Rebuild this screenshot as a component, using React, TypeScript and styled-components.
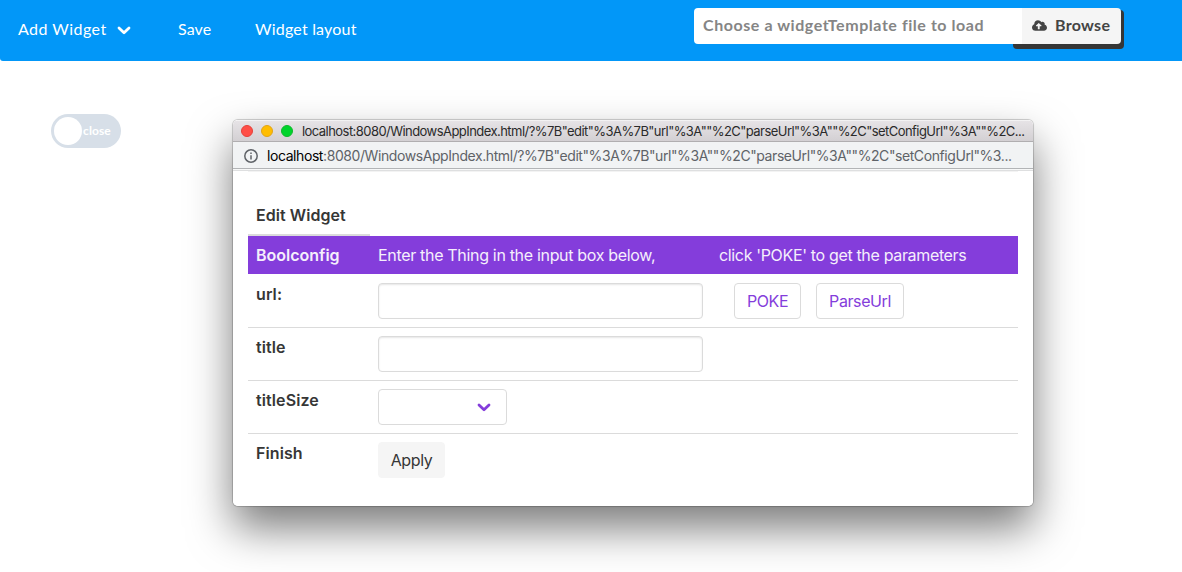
import React from "react";
import styled, { createGlobalStyle } from "styled-components";
import { FaCloudUploadAlt } from "react-icons/fa";

const GlobalStyle = createGlobalStyle`
  *, *::before, *::after { box-sizing: border-box; }
  html, body { margin: 0; height: 100%; overflow: hidden; background: #fff; }
  body { font-family: Inter, "Liberation Sans", sans-serif; font-size: 16px; line-height: 24px; color: #363636; }
  button, input { font: inherit; }
`;

const Page = styled.div`
  position: relative;
  width: 1182px;
  height: 572px;
  overflow: hidden;
`;

const NavBar = styled.nav`
  display: flex;
  align-items: flex-start;
  height: 61px;
  background: #0297f8;
  border-radius: 0 0 0 3px;
  color: #fff;
  font-family: Lato, sans-serif;
`;

const NavItem = styled.a<{ $width: number; $spacing?: number }>`
  display: flex;
  align-items: center;
  width: ${(p) => p.$width}px;
  height: 58px;
  white-space: nowrap;
  letter-spacing: ${(p) => p.$spacing ?? 0}px;
`;

const NavStart = styled.div`
  display: flex;
  width: 694px;
  padding-left: 18px;
`;

const Chevron = styled.svg`
  display: block;
  width: 14px;
  height: 9px;
  fill: none;
  stroke: currentColor;
  stroke-width: 2.8;
  stroke-linecap: round;
  stroke-linejoin: round;
`;

const ArrowSlot = styled.span`
  display: flex;
  margin: 2px 0 0 auto;
  padding-right: 47px;
`;

const FilePicker = styled.label`
  position: relative;
  display: flex;
  z-index: 0;
  width: 428px;
  height: 36px;
  margin-top: 8px;
  font-weight: 700;
  &::before {
    content: "";
    position: absolute;
    z-index: -1;
    left: 319px;
    top: 2px;
    width: 111px;
    height: 39px;
    border-radius: 4px;
    background: #363636;
  }
`;

const FileName = styled.span<{ $spacing: number }>`
  width: 328px;
  padding-left: 9px;
  line-height: 34px;
  background: #fff;
  border-radius: 4px 0 0 4px;
  color: #858585;
  white-space: nowrap;
  letter-spacing: ${(p) => p.$spacing}px;
`;

const BrowseButton = styled.span`
  display: flex;
  align-items: center;
  gap: 8px;
  width: 99px;
  padding: 0 0 2px 10px;
  background: #f5f5f5;
  border-radius: 0 4px 4px 0;
  color: #444;
  letter-spacing: 0.3px;
  svg { width: 15px; height: 15px; margin-top: 1px; }
`;

const Toggle = styled.div`
  display: flex;
  align-items: center;
  width: 70px;
  height: 34px;
  margin: 53px 0 0 51px;
  padding-left: 3px;
  border-radius: 17px;
  background: #d7dfe8;
  color: #fff;
  font: 700 12px/34px Lato, sans-serif;
  letter-spacing: 0.1px;
`;

const Knob = styled.span`
  width: 28px;
  height: 28px;
  margin-right: 1px;
  border-radius: 50%;
  background: #fff;
`;

const Window = styled.section`
  position: absolute;
  left: 233px;
  top: 120px;
  width: 800px;
  height: 386px;
  overflow: hidden;
  border-radius: 5px;
  background: #fff;
`;

const WindowShadow = styled.div`
  position: absolute;
  left: 233px;
  top: 120px;
  width: 800px;
  height: 386px;
  border-radius: 5px;
  box-shadow: 0 0 0 1px rgba(0, 0, 0, 0.13), 0 0 2px rgba(0, 0, 0, 0.2), 0 22px 44px rgba(0, 0, 0, 0.52);
`;

const TitleBar = styled.header`
  display: flex;
  align-items: center;
  height: 22px;
  padding: 0 8px;
  border-top: 1px solid #f3f2f3;
  border-bottom: 1px solid #b0aeb0;
  background: linear-gradient(#e6e3e6, #d3d0d3);
  color: #2a2a2a;
`;

const Light = styled.i<{ $color: string; $edge: string }>`
  flex: none;
  width: 12px;
  height: 12px;
  margin-right: 8px;
  border: 1px solid ${(p) => p.$edge};
  border-radius: 50%;
  background: ${(p) => p.$color};
`;

const BarText = styled.span<{ $size: number; $spacing: number; $indent?: number }>`
  padding-left: ${(p) => p.$indent ?? 0}px;
  font-size: ${(p) => p.$size}px;
  letter-spacing: ${(p) => p.$spacing}px;
  line-height: 20px;
  white-space: nowrap;
  b { font-weight: 400; color: #000; }
`;

const AddressBar = styled.div`
  display: flex;
  align-items: center;
  gap: 9px;
  height: 27px;
  padding: 1px 11px 0;
  border-bottom: 1px solid #b2b4b6;
  background: #f1f3f4;
  color: #5f6368;
`;

const InfoIcon = styled.svg`
  flex: none;
  width: 14px;
  height: 14px;
  fill: none;
  stroke: #5f6368;
  stroke-width: 1.5;
`;

const Divider = styled.div`
  height: 2px;
  border-bottom: 1px solid #dedfe0;
  background: #f7f8f8;
`;

const Content = styled.main`
  height: 335px;
  padding: 0 15px;
`;

const Heading = styled.h1`
  width: 122px;
  height: 64px;
  margin: 0;
  padding: 31px 0 0 8px;
  border-bottom: 2px solid #dbdbdb;
  font-size: 16px;
  line-height: 24px;
  font-weight: 600;
  letter-spacing: 0.05px;
  white-space: nowrap;
`;

const TopRule = styled.div`
  height: 1px;
  background: #f3f3f3;
`;

const Banner = styled.div`
  display: grid;
  grid-template-columns: 122px 341px 1fr;
  height: 38px;
  margin-bottom: 1px;
  padding-left: 8px;
  background: #843ddb;
  color: #f5effc;
  line-height: 38px;
`;

const Row = styled.div<{ $last?: boolean }>`
  display: grid;
  grid-template-columns: 122px 356px auto;
  justify-content: start;
  height: 53px;
  padding: 8px 0 0 8px;
  ${(p) => (p.$last ? "" : "box-shadow: inset 0 -1px #dbdbdb;")}
`;

const Label = styled.strong<{ $spacing?: number }>`
  font-weight: 600;
  white-space: nowrap;
  letter-spacing: ${(p) => p.$spacing ?? 0.1}px;
`;

const RowLabel = styled(Label)`
  line-height: 22px;
`;

const Phrase = styled.span<{ $spacing: number }>`
  white-space: nowrap;
  letter-spacing: ${(p) => p.$spacing}px;
`;

const Field = styled.input`
  width: 325px;
  height: 36px;
  padding: 0 10px;
  border: 1px solid #dbdbdb;
  border-radius: 4px;
  background: #fff;
  box-shadow: inset 0 1px 2px rgba(10, 10, 10, 0.1);
  outline: none;
`;

const Actions = styled.div`
  display: flex;
  gap: 15px;
`;

const Button = styled.button<{ $width: number; $plain?: boolean; $spacing?: number }>`
  width: ${(p) => p.$width}px;
  height: 36px;
  padding: 0;
  border: 1px solid ${(p) => (p.$plain ? "#f5f5f5" : "#dbdbdb")};
  border-radius: 4px;
  background: ${(p) => (p.$plain ? "#f5f5f5" : "#fff")};
  color: ${(p) => (p.$plain ? "#363636" : "#843ddb")};
  letter-spacing: ${(p) => p.$spacing ?? -0.4}px;
`;

const Select = styled.div`
  display: flex;
  align-items: center;
  justify-content: flex-end;
  width: 129px;
  height: 36px;
  padding-right: 15px;
  border: 1px solid #dbdbdb;
  border-radius: 4px;
  color: #843ddb;
`;

const Arrow = () => (
  <Chevron viewBox="0 0 14 9">
    <path d="M2 2l5 4.8L12 2" />
  </Chevron>
);

export default function App() {
  return (
    <Page>
      <GlobalStyle />
      <NavBar>
        <NavStart>
          <NavItem $width={160} $spacing={0.45}>
            Add Widget
            <ArrowSlot>
              <Arrow />
            </ArrowSlot>
          </NavItem>
          <NavItem $width={77} $spacing={0.1}>Save</NavItem>
          <NavItem $width={110} $spacing={0.2}>Widget layout</NavItem>
        </NavStart>
        <FilePicker>
          <FileName $spacing={0.56}>Choose a widgetTemplate file to load</FileName>
          <BrowseButton>
            <FaCloudUploadAlt />
            Browse
          </BrowseButton>
        </FilePicker>
      </NavBar>
      <WindowShadow />
      <Toggle>
        <Knob />
        close
      </Toggle>
      <Window>
        <TitleBar>
          <Light $color="#ff4e47" $edge="#e5403a" />
          <Light $color="#ffbd00" $edge="#e2a416" />
          <Light $color="#00d42c" $edge="#0fb82b" />
          <BarText $size={13} $spacing={-0.55} $indent={1}>
            {'localhost:8080/WindowsAppIndex.html/?%7B"edit"%3A%7B"url"%3A""%2C"parseUrl"%3A""%2C"setConfigUrl"%3A""%2C...'}
          </BarText>
        </TitleBar>
        <AddressBar>
          <InfoIcon viewBox="0 0 14 14">
            <circle cx="7" cy="7" r="6.2" />
            <path d="M7 6.2v4.3M7 3.4v1.6" />
          </InfoIcon>
          <BarText $size={14} $spacing={-0.42}>
            <b>localhost</b>
            {':8080/WindowsAppIndex.html/?%7B"edit"%3A%7B"url"%3A""%2C"parseUrl"%3A""%2C"setConfigUrl"%3...'}
          </BarText>
        </AddressBar>
        <Divider />
        <Content>
          <TopRule />
          <Heading>Edit Widget</Heading>
          <Banner>
            <Label $spacing={0}>Boolconfig</Label>
            <Phrase $spacing={-0.32}>Enter the Thing in the input box below,</Phrase>
            <Phrase $spacing={-0.34}>click 'POKE' to get the parameters</Phrase>
          </Banner>
          <Row>
            <RowLabel>url:</RowLabel>
            <Field />
            <Actions>
              <Button $width={67}>POKE</Button>
              <Button $width={88}>ParseUrl</Button>
            </Actions>
          </Row>
          <Row>
            <RowLabel>title</RowLabel>
            <Field />
          </Row>
          <Row>
            <RowLabel>titleSize</RowLabel>
            <Select>
              <Arrow />
            </Select>
          </Row>
          <Row $last>
            <RowLabel>Finish</RowLabel>
            <Button $width={67} $plain>Apply</Button>
          </Row>
        </Content>
      </Window>
    </Page>
  );
}
